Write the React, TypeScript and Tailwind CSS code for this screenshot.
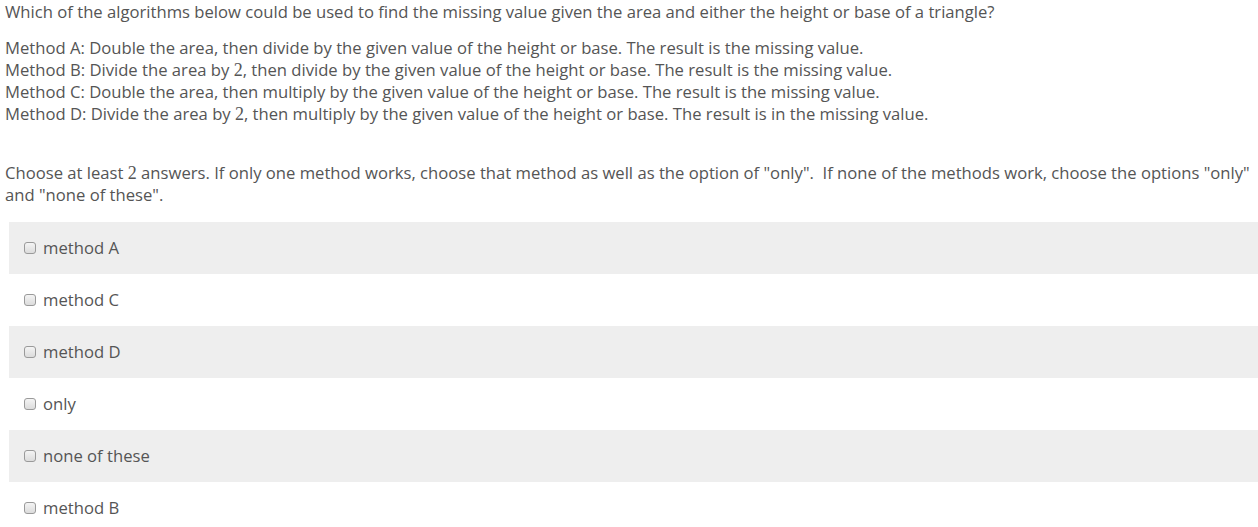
import React from "react";

const options = ["method A", "method C", "method D", "only", "none of these", "method B"];

const Two = () => <span className="font-['Liberation_Serif',serif] text-[18px] leading-none">2</span>;

const App: React.FC = () => {
  return (
    <div className="w-[1258px] h-[527px] overflow-hidden bg-white font-['Open_Sans',sans-serif] text-[16.65px] leading-[22px] text-[#555555]">
      {/* question */}
      <div className="pl-[5px] pt-px">
        <p>
          Which of the algorithms below could be used to find the missing value given the area and either the height or
          base of a triangle?
        </p>
        <div className="mt-[14px]">
          <p>Method A: Double the area, then divide by the given value of the height or base. The result is the missing value.</p>
          <p>
            Method B: Divide the area by <Two />, then divide by the given value of the height or base. The result is the
            missing value.
          </p>
          <p>Method C: Double the area, then multiply by the given value of the height or base. The result is the missing value.</p>
          <p>
            Method D: Divide the area by <Two />, then multiply by the given value of the height or base. The result is in
            the missing value.
          </p>
        </div>
        <p className="mt-[37px] pr-[2px]">
          Choose at least <Two /> answers. If only one method works, choose that method as well as the option of "only".&nbsp;
          If none of the methods work, choose the options "only" and "none of these".
        </p>
      </div>

      {/* answers */}
      <div className="mt-[16px] ml-[9px]">
        {options.map((opt, i) => (
          <label
            key={opt}
            className={`flex items-center h-[52px] pl-[15px] ${i % 2 === 0 ? "bg-[#eeeeee]" : "bg-white"}`}
          >
            <span className="w-[12px] h-[12px] rounded-[3px] border border-[#9a9a9a] bg-gradient-to-b from-[#f4f4f4] to-[#dcdcdc] mr-[7px]" />
            <span>{opt}</span>
          </label>
        ))}
      </div>
    </div>
  );
};

export default App;
